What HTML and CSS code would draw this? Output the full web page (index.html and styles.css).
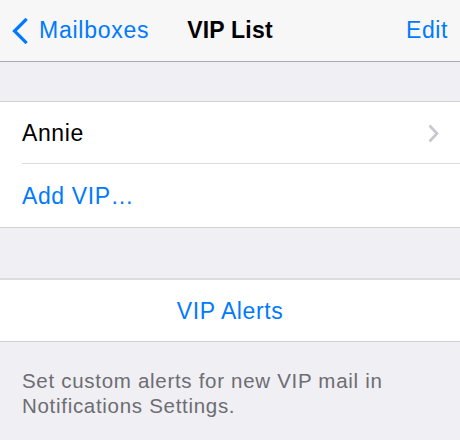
FILE: index.html
```html
<!DOCTYPE html>
<html>
<head>
<meta charset="utf-8">
<link rel="stylesheet" href="styles.css">
</head>
<body>
<div class="screen">
  <header class="navbar">
    <a class="nav-back">
      <svg class="back-chevron" width="18" height="26" viewBox="0 0 18 26"><path d="M14.5 2 L3.5 13 L14.5 24" fill="none" stroke="#007aff" stroke-width="3.2" stroke-linecap="square" stroke-linejoin="miter"/></svg>
      <span class="nav-back-label">Mailboxes</span>
    </a>
    <h1 class="nav-title">VIP List</h1>
    <a class="nav-edit">Edit</a>
  </header>

  <section class="group group-first">
    <div class="row row-sep">
      <span class="row-label">Annie</span>
      <svg class="disclosure" width="11" height="19" viewBox="0 0 11 19"><path d="M1.5 1.5 L9 9.5 L1.5 17.5" fill="none" stroke="#c7c7cc" stroke-width="2.6"/></svg>
    </div>
    <div class="row row-last">
      <span class="row-label link">Add VIP…</span>
    </div>
  </section>

  <section class="group group-second">
    <div class="row row-center">
      <span class="row-label link">VIP Alerts</span>
    </div>
  </section>

  <p class="footer-note">Set custom alerts for new VIP mail in Notifications Settings.</p>
</div>
</body>
</html>
```

FILE: styles.css
```css
html, body {
  margin: 0;
  padding: 0;
}
body {
  background: #efeff4;
  font-family: "Liberation Sans", Arial, sans-serif;
  width: 460px;
  height: 440px;
  overflow: hidden;
}
.screen {
  display: flex;
  flex-direction: column;
}
.navbar {
  height: 61px;
  background: #f7f7f8;
  border-bottom: 1px solid #a9a9ad;
  display: grid;
  grid-template-columns: 1fr auto 1fr;
  align-items: center;
}
.nav-back {
  display: flex;
  align-items: center;
  gap: 10px;
  padding-left: 11px;
  color: #007aff;
  font-size: 23px;
  letter-spacing: 0.75px;
}
.back-chevron {
  display: block;
  margin-top: 1px;
}
.nav-title {
  margin: 0;
  font-size: 23px;
  font-weight: bold;
  letter-spacing: 0.2px;
  color: #000;
}
.nav-edit {
  justify-self: end;
  padding-right: 12px;
  color: #007aff;
  font-size: 23px;
  letter-spacing: 0.6px;
}
.group {
  background: #fff;
  border-top: 1px solid #d0d0d4;
  border-bottom: 1px solid #d0d0d4;
}
.group-first {
  margin-top: 39px;
}
.group-second {
  margin-top: 50px;
  border-top: 2px solid #dcdce0;
}
.row {
  height: 62px;
  display: flex;
  align-items: center;
  justify-content: space-between;
  padding-left: 22px;
  padding-right: 22px;
  box-sizing: border-box;
  position: relative;
}
.row-sep::after {
  content: "";
  position: absolute;
  left: 22px;
  right: 0;
  bottom: 0;
  height: 1px;
  background: #dcdce0;
}
.row-last {
  height: 63px;
}
.row-center {
  height: 61px;
  justify-content: center;
}
.row-label {
  font-size: 23px;
  letter-spacing: 0.6px;
  color: #000;
  margin-top: 1px;
}
.row-label.link {
  color: #007aff;
}
.disclosure {
  display: block;
  margin-right: -1px;
}
.footer-note {
  margin: 0;
  padding: 26px 22px 0 22px;
  font-size: 20.5px;
  line-height: 25px;
  letter-spacing: 0.7px;
  color: #6d6d72;
}
```
